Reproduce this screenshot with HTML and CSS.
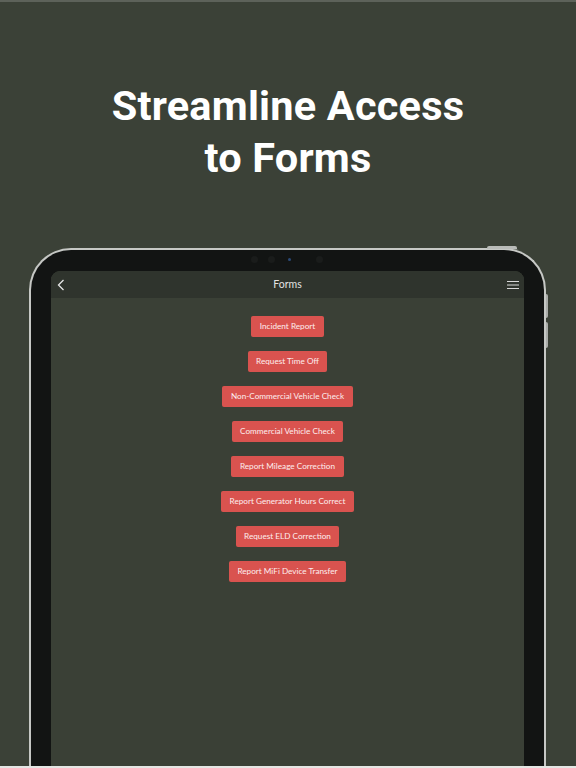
FILE: index.html
```html
<!DOCTYPE html>
<html>
<head>
<meta charset="utf-8">
<link rel="stylesheet" href="styles.css">
</head>
<body>
<div class="page">
  <div class="hero">
    <h1 class="title">Streamline Access<br>to Forms</h1>
  </div>
  <div class="device">
    <span class="top-btn"></span>
    <span class="side-btn side-btn-1"></span>
    <span class="side-btn side-btn-2"></span>
    <div class="cams">
      <span class="cam"></span>
      <span class="cam"></span>
      <span class="cam cam-blue"></span>
      <span class="cam cam-far"></span>
    </div>
    <div class="screen">
      <div class="appbar">
        <svg class="back" width="8" height="12" viewBox="0 0 8 12"><path d="M6.5 1 L1.5 6 L6.5 11" fill="none" stroke="#e6e6e6" stroke-width="1.3"/></svg>
        <div class="appbar-title">Forms</div>
        <svg class="menu" width="12" height="10" viewBox="0 0 12 10"><path d="M0 1.5H12M0 5H12M0 8.5H12" stroke="#d8d8d8" stroke-width="1.1"/></svg>
      </div>
      <div class="forms">
        <button class="form-btn">Incident Report</button>
        <button class="form-btn">Request Time Off</button>
        <button class="form-btn">Non-Commercial Vehicle Check</button>
        <button class="form-btn">Commercial Vehicle Check</button>
        <button class="form-btn">Report Mileage Correction</button>
        <button class="form-btn">Report Generator Hours Correct</button>
        <button class="form-btn">Request ELD Correction</button>
        <button class="form-btn">Report MiFi Device Transfer</button>
      </div>
    </div>
  </div>
</div>
</body>
</html>
```
FILE: styles.css
```css
html, body {
  margin: 0;
  padding: 0;
}
body {
  background: #3b4137;
  overflow: hidden;
}
.page {
  width: 576px;
  height: 768px;
  box-sizing: border-box;
  border-top: 2px solid #5d625a;
  border-bottom: 2px solid #e4e6e3;
  overflow: hidden;
  background: #3b4137;
}
.hero {
  height: 246px;
  box-sizing: border-box;
  padding-top: 78px;
}
.title {
  margin: 0;
  text-align: center;
  color: #ffffff;
  font-family: Roboto, "Liberation Sans", sans-serif;
  font-weight: 700;
  font-size: 41.5px;
  line-height: 52px;
  letter-spacing: 0.2px;
}
.device {
  position: relative;
  margin-left: 29px;
  width: 517px;
  height: 560px;
  box-sizing: border-box;
  border: 2px solid #c6c8c5;
  border-bottom: none;
  border-radius: 42px 42px 0 0;
  background: #121413;
  padding: 21px 20px 0 20px;
}
.top-btn {
  position: absolute;
  top: -4px;
  left: 456px;
  width: 30px;
  height: 3px;
  border-radius: 2px 2px 0 0;
  background: #b9bbb8;
}
.side-btn {
  position: absolute;
  right: -4px;
  width: 2px;
  background: #a9aba8;
  border-radius: 0 2px 2px 0;
}
.side-btn-1 { top: 44px; height: 24px; }
.side-btn-2 { top: 72px; height: 26px; }
.cams {
  position: absolute;
  top: 6px;
  left: 0;
  width: 100%;
  height: 7px;
}
.cam {
  position: absolute;
  top: 0;
  width: 7px;
  height: 7px;
  border-radius: 50%;
  background: #1a1c1b;
}
.cam:nth-child(1) { left: 220px; }
.cam:nth-child(2) { left: 237px; }
.cam-blue {
  left: 257px;
  top: 2px;
  width: 3px;
  height: 3px;
  background: #2b4a78;
}
.cam-far { left: 285px; }
.screen {
  height: 100%;
  background: #3a4036;
  border-radius: 9px 9px 0 0;
  overflow: hidden;
}
.appbar {
  height: 27px;
  background: #2f342d;
  display: flex;
  align-items: center;
  justify-content: space-between;
  padding: 0 5px 0 6px;
  position: relative;
}
.back { display: block; }
.menu { display: block; }
.appbar-title {
  position: absolute;
  left: 0;
  right: 0;
  text-align: center;
  color: #e2e2e2;
  font-family: Lato, "Open Sans", sans-serif;
  font-size: 10.5px;
  line-height: 25px;
  pointer-events: none;
}
.forms {
  display: flex;
  flex-direction: column;
  align-items: center;
  gap: 14px;
  padding-top: 18px;
}
.form-btn {
  height: 21px;
  padding: 0 8.5px;
  border: none;
  border-radius: 2px;
  background: #d9534f;
  color: #fdeeee;
  font-family: Lato, "Open Sans", sans-serif;
  font-size: 8.2px;
  line-height: 21px;
  white-space: nowrap;
}
```
